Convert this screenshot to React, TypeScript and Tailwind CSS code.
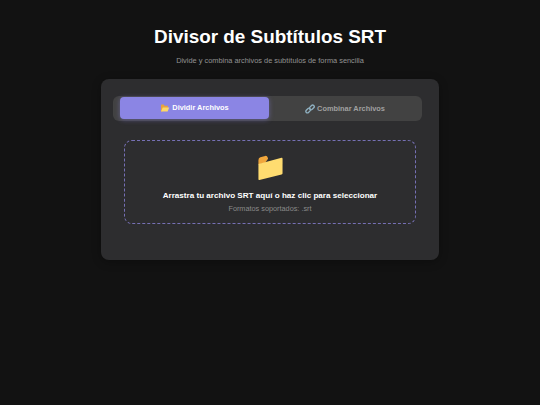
function FolderIcon({ className }: { className: string }) {
  return (
    <svg viewBox="0 0 32 28" className={className} aria-hidden="true">
      <path d="M4 7.5 Q4 5 6 4.5 L11 3 Q13 2.6 13.5 4.5 L14 6 L11 10 L4 12 Z" fill="#f0a63c" />
      <path d="M4 11.5 L28 5 Q29 4.8 29 6 L29 21 Q29 22 28 22.3 L5 28 Q4 28.2 4 27 Z" fill="#ffdc70" />
    </svg>
  );
}

function LinkIcon({ className }: { className: string }) {
  return (
    <svg viewBox="0 0 16 16" className={className} fill="none" stroke="#8fb0c0" strokeWidth="2.2" aria-hidden="true">
      <rect x="0.8" y="8" width="8.5" height="5" rx="2.5" transform="rotate(-45 5 10.5)" />
      <rect x="6.7" y="3" width="8.5" height="5" rx="2.5" transform="rotate(-45 11 5.5)" />
    </svg>
  );
}

export default function App() {
  return (
    <div className="min-h-[405px] bg-[#121212] px-[101px] pt-[25px] font-['Liberation_Sans',Arial,sans-serif] antialiased">
      <header className="text-center">
        <h1 className="text-[18.9px] leading-[23px] font-bold text-white">Divisor de Subtítulos SRT</h1>
        <p className="mt-[8px] text-[7.4px] leading-[10px] text-[#939393]">Divide y combina archivos de subtítulos de forma sencilla</p>
      </header>

      <main className="mt-[13px] h-[181px] rounded-[8px] bg-[#2d2d2f] pt-[17px] pr-[17px] pl-[12px] shadow-[0_2px_10px_rgba(0,0,0,0.3)]">
        <div className="flex h-[25px] rounded-[6px] bg-[#424242] p-[1px] pl-[7px]">
          <button className="flex h-[22px] w-[149px] items-center justify-center gap-[2px] rounded-[4px] bg-[#8b85e4] text-[7.4px] font-bold text-white shadow-[0_1px_5px_rgba(139,133,228,0.45)]">
            <svg viewBox="0 0 16 14" className="h-[8px] w-[10px]" aria-hidden="true">
              <path d="M1 2 Q1 1 2 1 L6 1 L7 3 L13 3 L13 6 L3 13 L1 13 Z" fill="#e8a33c" />
              <path d="M4 6 L15.5 6 L12.5 13 L1 13 Z" fill="#fdd868" />
            </svg>
            Dividir Archivos
          </button>
          <button className="flex h-[23px] flex-1 items-center justify-center gap-[2px] rounded-[4px] text-[7.4px] font-bold text-[#a0a0a0]">
            <LinkIcon className="h-[10px] w-[10px]" />
            Combinar Archivos
          </button>
        </div>

        <div className="mt-[19px] mr-[6px] ml-[11px] flex h-[84px] flex-col items-center rounded-[8px] border border-dashed border-[#7670b4] pt-[12px]">
          <FolderIcon className="h-[27px] w-[32px]" />
          <p className="mt-[10px] text-[8.1px] leading-[11px] font-bold text-white">Arrastra tu archivo SRT aquí o haz clic para seleccionar</p>
          <p className="mt-[3px] text-[7.3px] leading-[10px] text-[#8a8a8a]">Formatos soportados: .srt</p>
        </div>
      </main>
    </div>
  );
}
